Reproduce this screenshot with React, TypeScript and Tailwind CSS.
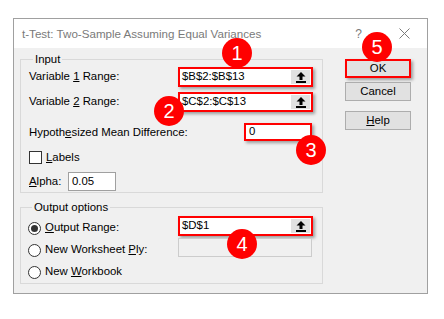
import React from 'react';

const UploadIcon = () => (
  <svg width="10" height="11" viewBox="0 0 10 11">
    <path d="M5 0 L9.5 4.5 H6.5 V8 H3.5 V4.5 H0.5 Z" fill="#000" />
    <rect x="0" y="9" width="10" height="2" fill="#000" />
  </svg>
);

const CloseIcon = () => (
  <svg width="11" height="11" viewBox="0 0 11 11">
    <path d="M0.5 0.5 L10.5 10.5 M10.5 0.5 L0.5 10.5" stroke="#7a7a7a" strokeWidth="1" />
  </svg>
);

const RangeBox = ({ value, className = '' }: { value: string; className?: string }) => (
  <div
    className={`flex items-stretch border-2 border-[#ff0000] bg-white shadow-[2px_2px_3px_rgba(0,0,0,0.35)] ${className}`}
  >
    <span className="flex flex-1 items-center pl-[2px]">{value}</span>
    <span className="my-[1px] mr-[1px] flex w-[19px] items-center justify-center bg-[#e1e1e1]">
      <UploadIcon />
    </span>
  </div>
);

const Badge = ({ n, className }: { n: string; className: string }) => (
  <div
    className={`absolute flex h-[30px] w-[30px] items-center justify-center rounded-full bg-[#ff0000] font-['Liberation_Sans',sans-serif] text-[20px] leading-none text-white ${className}`}
  >
    {n}
  </div>
);

const Radio = ({ checked = false }: { checked?: boolean }) => (
  <span className="flex h-[13px] w-[13px] items-center justify-center rounded-full border border-[#333333] bg-white">
    {checked && <span className="h-[7px] w-[7px] rounded-full bg-[#333333]" />}
  </span>
);

export default function App() {
  return (
    <div className="relative h-[319px] w-[444px] overflow-hidden bg-white pl-[13px] pt-[18px] font-['Liberation_Sans',sans-serif] text-[11.4px] text-black">
      <div className="flex h-[276px] w-[415px] flex-col border border-[#a0a0a0]">
        {/* Title bar */}
        <div className="flex h-[29px] items-center bg-white pl-[8px] pr-[17px] text-[#7a7a7a]">
          <span className="text-[11.6px]">t-Test: Two-Sample Assuming Equal Variances</span>
          <span className="ml-auto text-[12px]">?</span>
          <span className="ml-[37px] flex items-center">
            <CloseIcon />
          </span>
        </div>

        {/* Body */}
        <div className="flex flex-1 bg-[#f0f0f0] px-[6px]">
          <div className="flex w-[303px] flex-col pt-[3px]">
            {/* Input group */}
            <fieldset className="border border-[#d9d9d9] pb-[1px] pl-[8px] pr-[9px]">
              <legend className="ml-[4px] px-[2px] leading-[16px]">Input</legend>
              <div className="flex h-[20px] items-center">
                <span>
                  Variable <u>1</u> Range:
                </span>
                <RangeBox value="$B$2:$B$13" className="ml-auto h-full w-[135px]" />
              </div>
              <div className="mt-[5px] flex h-[20px] items-center">
                <span>
                  Variable <u>2</u> Range:
                </span>
                <RangeBox value="$C$2:$C$13" className="ml-auto h-full w-[135px]" />
              </div>
              <div className="mt-[11px] flex h-[18px] items-center">
                <span className="pt-[2px]">
                  Hypoth<u>e</u>sized Mean Difference:
                </span>
                <div className="ml-auto mr-[1px] flex h-full w-[68px] items-center border-2 border-[#ff0000] bg-white pl-[3px] shadow-[2px_2px_3px_rgba(0,0,0,0.35)]">
                  0
                </div>
              </div>
              <div className="mt-[10px] flex h-[13px] items-center">
                <span className="h-[13px] w-[13px] border border-[#333333] bg-white" />
                <span className="ml-[4px]">
                  <u>L</u>abels
                </span>
              </div>
              <div className="mt-[8px] flex h-[19px] items-center">
                <span className="w-[39px]">
                  <u>A</u>lpha:
                </span>
                <div className="flex h-full w-[48px] items-center border border-[#a0a0a0] bg-white pl-[3px]">
                  0.05
                </div>
              </div>
            </fieldset>

            {/* Output group */}
            <fieldset className="mt-[6px] border border-[#d9d9d9] pl-[7px] pr-[9px]">
              <legend className="ml-[4px] px-[2px] leading-[16px]">Output options</legend>
              <div className="flex">
                <div className="flex flex-col pt-[2px]">
                  <div className="flex h-[22px] items-center">
                    <Radio checked />
                    <span className="ml-[4px]">
                      <u>O</u>utput Range:
                    </span>
                  </div>
                  <div className="flex h-[22px] items-center">
                    <Radio />
                    <span className="ml-[4px]">
                      New Worksheet <u>P</u>ly:
                    </span>
                  </div>
                  <div className="flex h-[22px] items-center">
                    <Radio />
                    <span className="ml-[4px]">
                      New <u>W</u>orkbook
                    </span>
                  </div>
                </div>
                <div className="ml-auto flex flex-col items-start pt-[1px]">
                  <RangeBox value="$D$1" className="h-[20px] w-[135px]" />
                  <div className="mt-[2px] h-[19px] w-[134px] border border-[#cccccc] bg-[#f0f0f0]" />
                </div>
              </div>
            </fieldset>
          </div>

          {/* Buttons */}
          <div className="ml-[22px] flex w-[66px] flex-col pt-[11px]">
            <div className="flex h-[19px] items-center justify-center border-2 border-[#ff0000] bg-[#e1e1e1] shadow-[2px_2px_3px_rgba(0,0,0,0.35)]">
              OK
            </div>
            <div className="mt-[4px] flex h-[19px] items-center justify-center border border-[#adadad] bg-[#e1e1e1]">
              Cancel
            </div>
            <div className="mt-[10px] flex h-[19px] items-center justify-center border border-[#adadad] bg-[#e1e1e1]">
              <span>
                <u>H</u>elp
              </span>
            </div>
          </div>
        </div>
      </div>

      <Badge n="1" className="left-[222px] top-[38px]" />
      <Badge n="2" className="left-[154px] top-[96px]" />
      <Badge n="3" className="left-[296px] top-[135px]" />
      <Badge n="4" className="left-[227px] top-[229px]" />
      <Badge n="5" className="left-[362px] top-[32px]" />
    </div>
  );
}
